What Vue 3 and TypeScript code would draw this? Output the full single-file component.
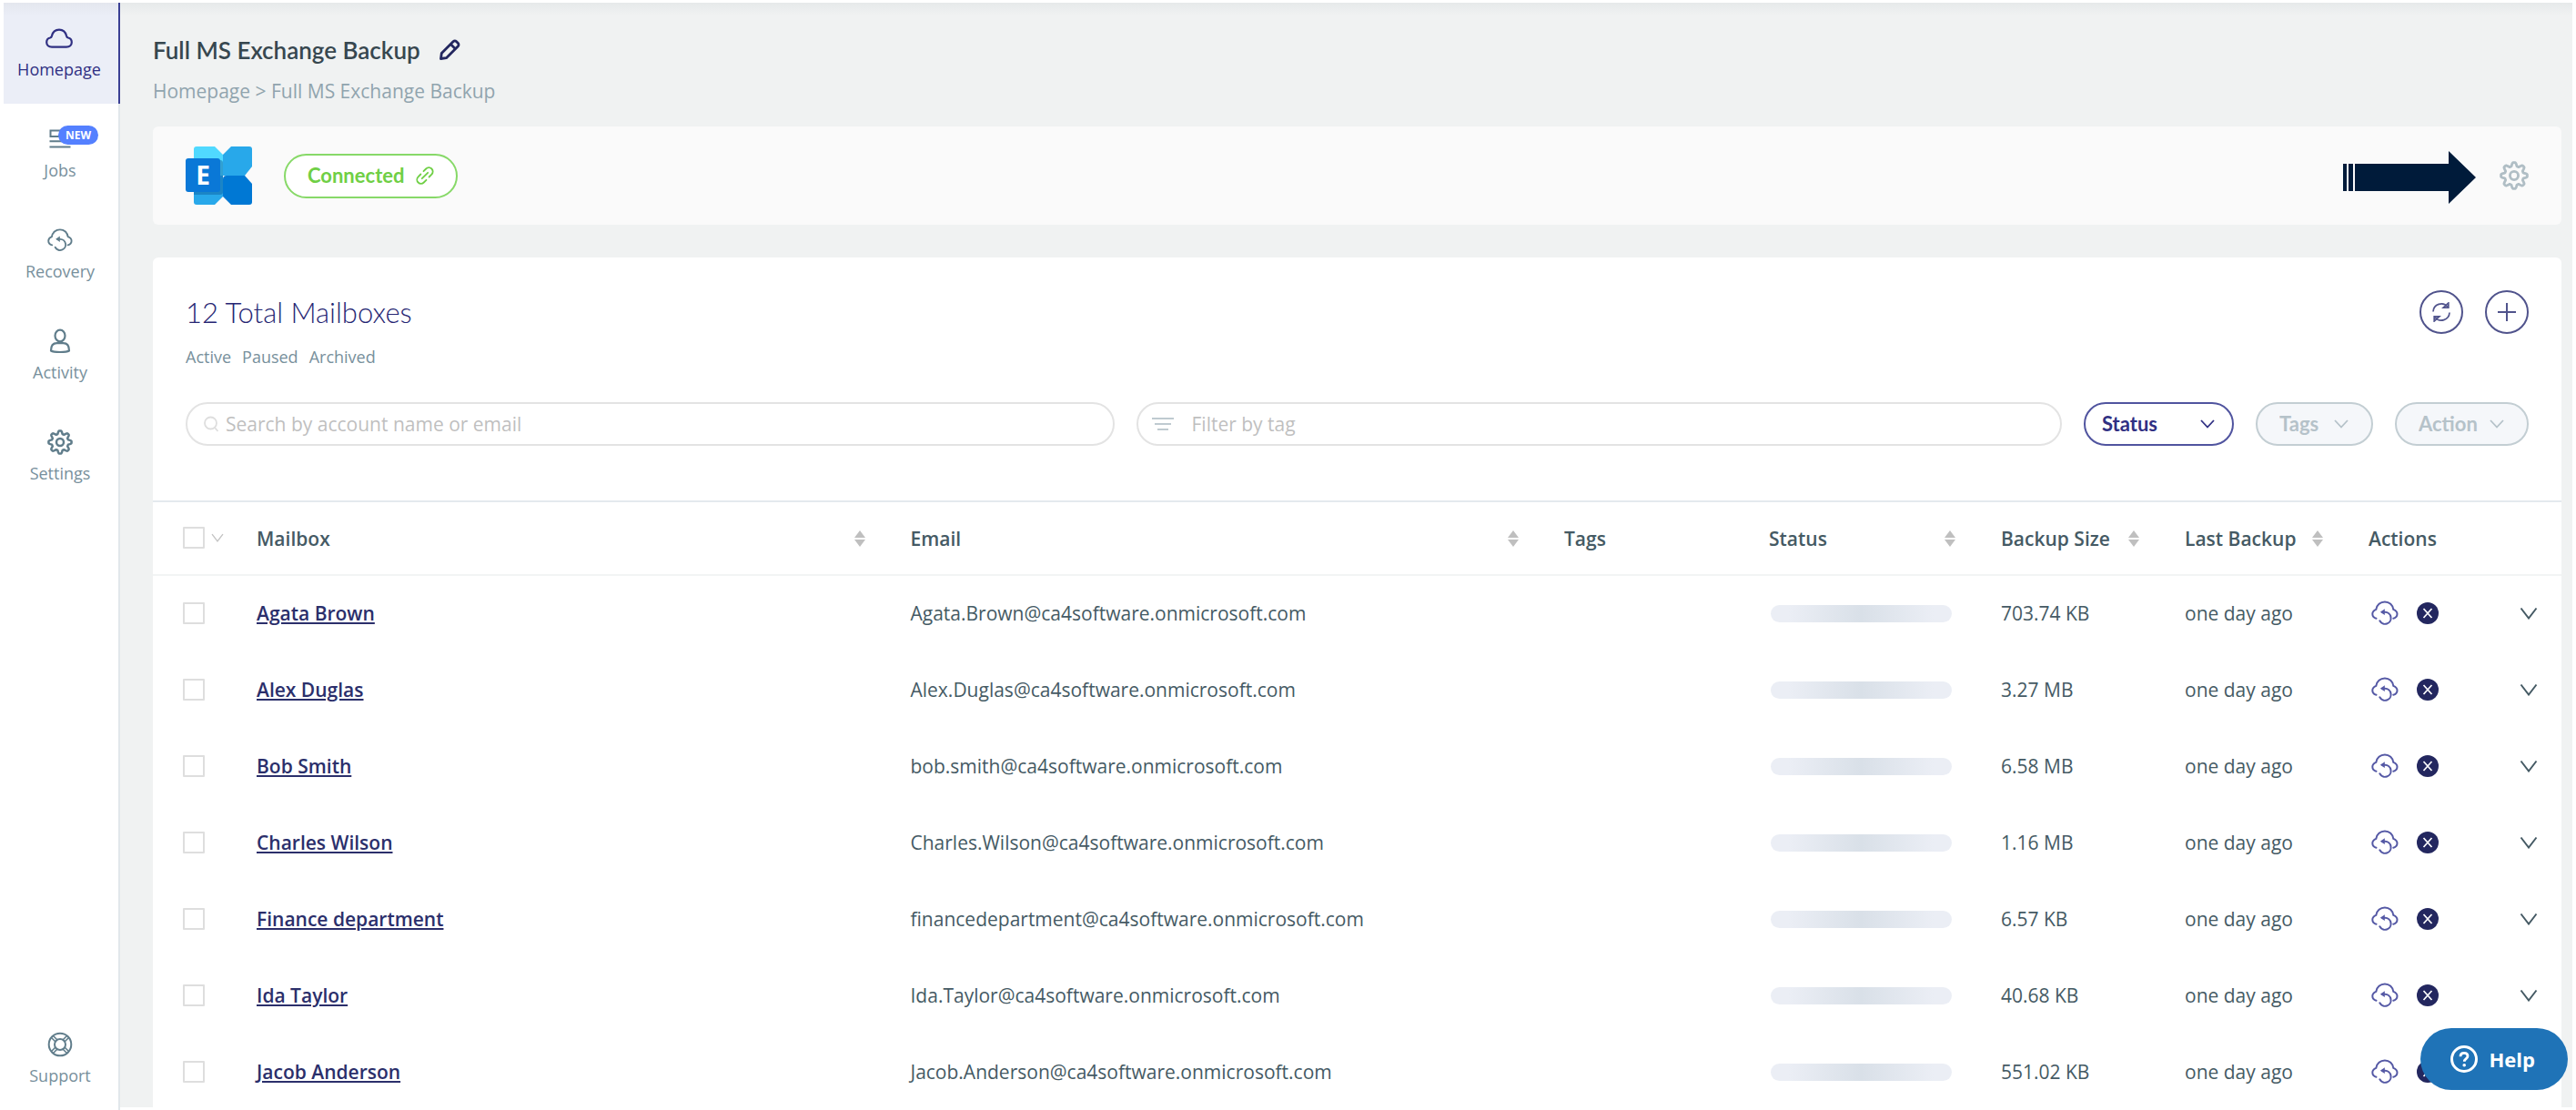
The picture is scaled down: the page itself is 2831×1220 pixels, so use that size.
<script setup lang="ts">
import { ref } from 'vue'

interface NavItem {
  label: string
  icon: string
  active?: boolean
  badge?: string
}

interface Mailbox {
  name: string
  email: string
  size: string
  last: string
}

const navItems: NavItem[] = [
  { label: 'Homepage', icon: 'cloud', active: true },
  { label: 'Jobs', icon: 'jobs', badge: 'NEW' },
  { label: 'Recovery', icon: 'recover' },
  { label: 'Activity', icon: 'user' },
  { label: 'Settings', icon: 'gear' },
]

const mailboxes: Mailbox[] = [
  { name: 'Agata Brown', email: 'Agata.Brown@ca4software.onmicrosoft.com', size: '703.74 KB', last: 'one day ago' },
  { name: 'Alex Duglas', email: 'Alex.Duglas@ca4software.onmicrosoft.com', size: '3.27 MB', last: 'one day ago' },
  { name: 'Bob Smith', email: 'bob.smith@ca4software.onmicrosoft.com', size: '6.58 MB', last: 'one day ago' },
  { name: 'Charles Wilson', email: 'Charles.Wilson@ca4software.onmicrosoft.com', size: '1.16 MB', last: 'one day ago' },
  { name: 'Finance department', email: 'financedepartment@ca4software.onmicrosoft.com', size: '6.57 KB', last: 'one day ago' },
  { name: 'Ida Taylor', email: 'Ida.Taylor@ca4software.onmicrosoft.com', size: '40.68 KB', last: 'one day ago' },
  { name: 'Jacob Anderson', email: 'Jacob.Anderson@ca4software.onmicrosoft.com', size: '551.02 KB', last: 'one day ago' },
]

const columns = [
  { key: 'mailbox', label: 'Mailbox', sortable: true },
  { key: 'email', label: 'Email', sortable: true },
  { key: 'tags', label: 'Tags', sortable: false },
  { key: 'status', label: 'Status', sortable: true },
  { key: 'size', label: 'Backup Size', sortable: true },
  { key: 'last', label: 'Last Backup', sortable: true },
  { key: 'actions', label: 'Actions', sortable: false },
]

const search = ref('')
const tagFilter = ref('')

// Eight-toothed cog outline on a 28 x 28 grid
function cogPath(): string {
  const points: string[] = []
  for (let i = 0; i < 160; i++) {
    const angle = (i / 160) * Math.PI * 2
    const wave = Math.max(-1, Math.min(1, Math.cos(angle * 8) * 1.4))
    const radius = 10.9 + wave * 1.7
    points.push(`${(14 + radius * Math.sin(angle)).toFixed(2)} ${(14 - radius * Math.cos(angle)).toFixed(2)}`)
  }
  return `M${points.join('L')}Z`
}
const cog = cogPath()
</script>

<template>
  <div class="app">
    <svg class="sprite" aria-hidden="true">
      <symbol id="i-cloud" viewBox="0 0 30 28">
        <path d="M7 23.700C3.400 23.700 1.200 21.400 1.200 18.500c0-2.700 1.700-4.500 3.900-5 1-.3 1.500-.8 1.800-1.900C7.900 7.400 11 4.700 15 4.700s7.100 2.700 8.100 6.900c.3 1.100.8 1.600 1.800 1.900 2.200.5 3.900 2.300 3.900 5 0 2.900-2.200 5.200-5.800 5.200z" fill="none" stroke="currentColor" stroke-width="2.200" />
      </symbol>
      <symbol id="i-jobs" viewBox="0 0 28 28">
        <path d="M3.500 4.500h21v6.500h-21zM2.500 16.300h23M2.500 22.500h23" fill="none" stroke="currentColor" stroke-width="2" />
      </symbol>
      <symbol id="i-recover" viewBox="0 0 30 28">
        <path d="M5.500 19.800C2.800 19 1.300 17.200 1.300 14.800c0-2.600 1.800-4 4-4.900C6 5 10 1.500 14.900 1.500s8.800 3.500 9.400 8.400c2.300.9 4.200 2.300 4.200 4.900 0 2.400-1.500 4.200-4.200 5M12 12.800h3a6.500 6.500 0 1 1-5.700 9.500" fill="none" stroke="currentColor" stroke-width="2" stroke-linecap="round" />
        <path d="M9.800 12.700l5-3.400v6.800z" fill="currentColor" />
      </symbol>
      <symbol id="i-user" viewBox="0 0 28 28">
        <ellipse cx="14" cy="8" rx="5.500" ry="6.300" fill="none" stroke="currentColor" stroke-width="2.200" />
        <path d="M10.500 16.200h7c4 0 6.500 2.800 6.500 8.300-3 2-17 2-20 0 0-5.500 2.500-8.300 6.500-8.300z" fill="none" stroke="currentColor" stroke-width="2.200" stroke-linejoin="round" />
      </symbol>
      <symbol id="i-gear" viewBox="0 0 28 28">
        <path :d="cog" fill="none" stroke="currentColor" stroke-width="2.500" stroke-linejoin="round" />
        <circle cx="14" cy="14" r="4" fill="none" stroke="currentColor" stroke-width="2.500" />
      </symbol>
      <symbol id="i-support" viewBox="0 0 28 28">
        <g fill="none" stroke="currentColor" stroke-width="2">
          <circle cx="14" cy="14" r="12.300" />
          <circle cx="14" cy="14" r="6" />
          <path d="M4.500 6.500l4.500 4.500M6.500 4.500l4.500 4.500M23.500 6.500l-4.500 4.500M21.500 4.500l-4.500 4.500M4.500 21.500l4.500-4.500M6.500 23.500l4.500-4.500M23.500 21.500l-4.500-4.500M21.500 23.500l-4.500-4.500" stroke-width="1.600" />
        </g>
      </symbol>
      <symbol id="i-down" viewBox="0 0 20 14">
        <path d="M1.500 1.500L10 12.500 18.500 1.500" fill="none" stroke="currentColor" stroke-width="2" />
      </symbol>
      <symbol id="i-caret" viewBox="0 0 16 10">
        <path d="M1 1l7 7.500L15 1" fill="none" stroke="currentColor" stroke-width="1.800" />
      </symbol>
    </svg>

    <nav class="sidebar" aria-label="Main">
      <a v-for="item in navItems" :key="item.label" href="#" class="nav-item" :class="{ active: item.active }">
        <span class="nav-icon">
          <svg class="icon" :class="{ wide: item.icon === 'cloud' }"><use :href="`#i-${item.icon}`" /></svg>
          <span v-if="item.badge" class="badge">{{ item.badge }}</span>
        </span>
        <span>{{ item.label }}</span>
      </a>
      <a href="#" class="nav-item support">
        <span class="nav-icon"><svg class="icon"><use href="#i-support" /></svg></span>
        <span>Support</span>
      </a>
    </nav>

    <main class="main">
      <header class="page-head">
        <h1>Full MS Exchange Backup</h1>
        <button class="plain edit" aria-label="Rename">
          <svg width="24" height="24" viewBox="0 0 24 24" fill="none" stroke="currentColor" stroke-width="2.800" stroke-linejoin="round">
            <path d="M2.500 21.500l.8-6L16 2.800c1.100-1.100 2.600-1.100 3.700 0l1.500 1.500c1.100 1.100 1.100 2.600 0 3.700L8.500 20.700z" />
            <path d="M13.200 5.500l5.300 5.300" stroke-width="2.800" />
          </svg>
        </button>
      </header>
      <div class="crumbs"><a href="#">Homepage</a> &gt; <span>Full MS Exchange Backup</span></div>

      <section class="connection">
        <svg class="exchange" viewBox="0 0 74 64" role="img" aria-label="Microsoft Exchange">
          <path d="M12 0h20l9 9v23H9V3q0-3 3-3z" fill="#50d9ff" />
          <path d="M9 32h32v23l-9 9H12q-3 0-3-3z" fill="#28a8ea" />
          <path d="M41 9l9-9h20q3 0 3 3v19l-8 10H41z" fill="#28a8ea" />
          <path d="M45 32h20l8 9v20q0 3-3 3H50l-9-9V36q0-4 4-4z" fill="#0078d4" />
          <path d="M9 15h29q3 0 3 3v32q0 3-3 3H9z" fill="#0b5a9c" opacity=".45" />
          <rect x="0" y="13" width="38" height="37" rx="3" fill="#0a78d7" />
          <text x="19" y="42" text-anchor="middle" font-family="Open Sans, sans-serif" font-weight="700" font-size="28" fill="#fff">E</text>
        </svg>
        <button class="connected">
          Connected
          <svg width="20" height="20" viewBox="0 0 20 20" fill="none" stroke="currentColor" stroke-width="1.800" stroke-linecap="round">
            <path d="M8.500 5.200l2.700-2.700a4.300 4.300 0 0 1 6.200 6.200l-2.800 2.800M11.500 14.800l-2.700 2.700a4.300 4.300 0 0 1-6.200-6.200l2.800-2.800M6.800 13.200l6.400-6.400" />
          </svg>
        </button>
        <svg class="pointer" viewBox="0 0 146 58" aria-hidden="true">
          <path d="M0 14h4v30H0zM6 14h5v30H6zM13 14h103V0l30 29-30 29V44H13z" fill="#001b3a" />
        </svg>
        <button class="plain config" aria-label="Backup settings">
          <svg width="32" height="32"><use href="#i-gear" /></svg>
        </button>
      </section>

      <section class="panel">
        <div class="panel-head">
          <h2>12 Total Mailboxes</h2>
          <div class="tools">
            <button class="round" aria-label="Refresh">
              <svg width="22" height="22" viewBox="0 0 22 22" fill="none" stroke="currentColor" stroke-width="1.700">
                <path d="M2 10.500a9 9 0 0 1 16-5.200M20 11.500a9 9 0 0 1-16 5.200" />
                <path d="M18.800 1v5.200h-5.600zM3.200 21v-5.200h5.600z" />
              </svg>
            </button>
            <button class="round" aria-label="Add">
              <svg width="22" height="22" viewBox="0 0 22 22" fill="none" stroke="currentColor" stroke-width="2">
                <path d="M11 1v20M1 11h20" />
              </svg>
            </button>
          </div>
        </div>
        <div class="legend"><span>Active</span><span>Paused</span><span>Archived</span></div>

        <div class="filters">
          <label class="field search">
            <svg width="16" height="18" viewBox="0 0 16 18" fill="none" stroke="#dedede" stroke-width="1.800">
              <circle cx="7.500" cy="8" r="6.500" /><path d="M12 13l3.500 4" />
            </svg>
            <input v-model="search" type="text" placeholder="Search by account name or email" aria-label="Search by account name or email" />
          </label>
          <label class="field tag">
            <svg width="24" height="16" viewBox="0 0 24 16" stroke="#bfcad0" stroke-width="2">
              <path d="M0 2h24M3 8h18M6 14h12" />
            </svg>
            <input v-model="tagFilter" type="text" placeholder="Filter by tag" aria-label="Filter by tag" />
          </label>
          <div class="drop status">
            <select aria-label="Status"><option>Status</option></select>
            <svg><use href="#i-caret" /></svg>
          </div>
          <div class="drop tags">
            <select aria-label="Tags" disabled><option>Tags</option></select>
            <svg><use href="#i-caret" /></svg>
          </div>
          <div class="drop action">
            <select aria-label="Action" disabled><option>Action</option></select>
            <svg><use href="#i-caret" /></svg>
          </div>
        </div>

        <table>
          <colgroup>
            <col class="c-check" />
            <col v-for="col in columns" :key="col.key" :class="`c-${col.key}`" />
          </colgroup>
          <thead>
            <tr>
              <th class="check">
                <span class="check-all">
                  <input type="checkbox" aria-label="Select all" />
                  <svg width="14" height="10"><use href="#i-down" /></svg>
                </span>
              </th>
              <th v-for="col in columns" :key="col.key" scope="col">
                <span class="th">
                  {{ col.label }}
                  <svg v-if="col.sortable" width="16" height="20" viewBox="0 0 16 20" fill="#bfbfbf">
                    <path d="M8 1l6 8H2zM8 19l6-8H2z" />
                  </svg>
                </span>
              </th>
            </tr>
          </thead>
          <tbody>
            <tr v-for="box in mailboxes" :key="box.name">
              <td class="check"><input type="checkbox" :aria-label="`Select ${box.name}`" /></td>
              <td><a href="#" class="name">{{ box.name }}</a></td>
              <td>{{ box.email }}</td>
              <td></td>
              <td><div class="skeleton"></div></td>
              <td>{{ box.size }}</td>
              <td>{{ box.last }}</td>
              <td>
                <div class="actions">
                  <button class="plain" aria-label="Recover"><svg class="recover"><use href="#i-recover" /></svg></button>
                  <button class="plain" aria-label="Remove">
                    <svg width="24" height="24" viewBox="0 0 24 24">
                      <circle cx="12" cy="12" r="12" fill="#23275f" />
                      <path d="M7.500 7l9 10M16.500 7l-9 10" stroke="#fff" stroke-width="1.700" />
                    </svg>
                  </button>
                  <button class="plain expand" aria-label="Expand"><svg width="20" height="14"><use href="#i-down" /></svg></button>
                </div>
              </td>
            </tr>
          </tbody>
        </table>
      </section>
    </main>

    <button class="help">
      <svg width="32" height="32" viewBox="0 0 32 32" fill="none" stroke="#fff" stroke-width="3">
        <circle cx="16" cy="16" r="13.500" />
        <path d="M12 13.200c0-2.400 1.600-3.900 4-3.900s4 1.400 4 3.500c0 2.800-3.700 2.800-3.700 5.900" stroke-width="2.800" />
        <circle cx="16.200" cy="22.700" r="1.800" fill="#fff" stroke="none" />
      </svg>
      Help
    </button>
  </div>
</template>

<style>
body {
  margin: 0;
  background: #fff;
}
</style>

<style scoped>
.app {
  box-sizing: border-box;
  display: flex;
  height: 100vh;
  padding: 3px 4px 0;
  overflow: hidden;
  font-family: "Open Sans", "Noto Sans", sans-serif;
  font-size: 21px;
  line-height: 30px;
  color: #455a64;
}
.app *,
.app *::before {
  box-sizing: border-box;
}
.sprite {
  position: absolute;
  width: 0;
  height: 0;
}
a {
  color: inherit;
  text-decoration: none;
}
svg {
  display: block;
  flex: none;
}
button,
input,
select {
  margin: 0;
  font: inherit;
  color: inherit;
}
.plain {
  padding: 0;
  border: 0;
  background: none;
}

.sidebar {
  display: flex;
  flex: none;
  flex-direction: column;
  width: 128px;
  border-right: 2px solid #e1e7eb;
}
.nav-item {
  display: flex;
  flex-direction: column;
  gap: 7px;
  align-items: center;
  height: 111px;
  padding: 25px 2px 0 0;
  font-size: 18px;
  line-height: 27px;
  color: #78909c;
}
.nav-item.active {
  margin-right: -2px;
  padding-right: 4px;
  border-right: 2px solid #3a3f94;
  background: linear-gradient(#e4e7ee, #ebeef7 14px);
  font-weight: 500;
  color: #303083;
}
.support {
  margin-top: auto;
}
.nav-icon {
  position: relative;
  color: #607d8b;
}
.active .nav-icon {
  color: #303083;
}
.icon {
  width: 28px;
  height: 28px;
}
.icon.wide {
  width: 30px;
}
.badge {
  position: absolute;
  top: -1px;
  left: 12px;
  padding: 0 8px;
  border-radius: 11px;
  background: #5480ff;
  font-size: 12px;
  font-weight: 700;
  line-height: 21px;
  color: #fff;
}

.main {
  flex: 1;
  min-width: 0;
  margin-bottom: 3px;
  padding: 34px 12px 0 36px;
  overflow: hidden;
  background: linear-gradient(#e6e9ea, #f0f2f2 14px);
}
.page-head {
  display: flex;
  gap: 20px;
  align-items: center;
}
h1,
h2 {
  margin: 0;
  font-family: Lato, "Open Sans", sans-serif;
}
h1 {
  font-size: 26px;
  font-weight: 600;
  line-height: 36px;
  color: #37474f;
}
.edit {
  color: #23275f;
}
.crumbs {
  margin: 12px 0 24px;
  color: #90a4ae;
}
.connection {
  display: flex;
  align-items: center;
  margin-bottom: 36px;
  padding: 22px 36px;
  border-radius: 6px;
  background: #fafafa;
}
.exchange {
  width: 74px;
  height: 64px;
}
.connected {
  display: flex;
  gap: 13px;
  align-items: center;
  height: 49px;
  margin-left: 34px;
  padding: 0 24px;
  border: 2px solid #87d968;
  border-radius: 25px;
  background: #fff;
  font-family: Lato, "Open Sans", sans-serif;
  font-size: 22px;
  font-weight: 700;
  color: #6fcf45;
}
.pointer {
  width: 146px;
  height: 58px;
  margin-top: 4px;
  margin-left: auto;
}
.config {
  margin-left: 26px;
  color: #b0bec5;
}

.panel {
  border-radius: 6px 6px 0 0;
  background: #fff;
}
.panel-head {
  display: flex;
  justify-content: space-between;
  padding: 36px 36px 0;
}
h2 {
  font-size: 31px;
  font-weight: 300;
  line-height: 48px;
  color: #262673;
}
.tools {
  display: flex;
  gap: 24px;
}
.round {
  display: flex;
  align-items: center;
  justify-content: center;
  width: 48px;
  height: 48px;
  padding: 0;
  border: 2px solid #50538c;
  border-radius: 50%;
  background: #fff;
  color: #50538c;
}
.legend {
  display: flex;
  gap: 12px;
  padding: 12px 36px 36px;
  font-size: 18px;
  line-height: 27px;
  color: #78909c;
}
.filters {
  display: flex;
  gap: 24px;
  padding: 0 36px 60px;
}
.field {
  display: flex;
  flex: 1;
  align-items: center;
  height: 48px;
  padding: 0 18px;
  border: 2px solid #e3e3e3;
  border-radius: 24px;
}
.search {
  gap: 8px;
}
.tag {
  gap: 20px;
  padding-left: 15px;
}
.field input {
  flex: 1;
  min-width: 0;
  padding: 0;
  border: 0;
  outline: 0;
  background: none;
}
.field input::placeholder {
  color: #bfbfbf;
  opacity: 1;
}
.drop {
  position: relative;
  height: 48px;
  font-family: Lato, "Open Sans", sans-serif;
  font-size: 22px;
  font-weight: 700;
  color: #b5c2c9;
}
.drop select {
  width: 100%;
  height: 100%;
  padding: 0 0 0 24px;
  border: 2px solid #c3ced3;
  border-radius: 24px;
  background: #f5f7fa;
  appearance: none;
  opacity: 1;
}
.drop svg {
  position: absolute;
  top: 19px;
  right: 27px;
  width: 16px;
  height: 10px;
  pointer-events: none;
}
.drop.status {
  width: 165px;
  color: #303083;
}
.drop.status select {
  padding-left: 18px;
  border-color: #50549f;
  background: #fff;
}
.drop.status svg {
  right: 21px;
}
.drop.tags {
  width: 129px;
}
.drop.action {
  width: 147px;
}

table {
  width: 100%;
  border-top: 2px solid #e4e9ee;
  border-spacing: 0;
  table-layout: fixed;
}
.c-check {
  width: 90px;
}
.c-tags {
  width: 225px;
}
.c-status {
  width: 255px;
}
.c-size,
.c-last {
  width: 202px;
}
.c-actions {
  width: 236px;
}
th {
  height: 81px;
  padding: 0 24px;
  border-bottom: 2px solid #f2f4f4;
  font-weight: 600;
  text-align: left;
  color: #455a64;
}
td {
  height: 84px;
  padding: 0 24px 2px;
}
.check {
  padding: 0 0 2px 33px;
}
.th {
  display: flex;
  align-items: center;
  justify-content: space-between;
  white-space: nowrap;
}
.check-all {
  display: flex;
  gap: 7px;
  align-items: center;
  color: #c4c4c4;
}
input[type="checkbox"] {
  display: block;
  width: 24px;
  height: 24px;
  border: 2px solid #dedede;
  border-radius: 1px;
  background: #fff;
  appearance: none;
}
.name {
  font-weight: 600;
  color: #2b2f6b;
  text-decoration: underline;
}
.skeleton {
  height: 19px;
  margin: 0 6px 0 2px;
  border-radius: 10px;
  background: linear-gradient(90deg, #ebeef5 10%, #d9e0e8 50%, #ebeef5 90%);
}
.actions {
  display: flex;
  align-items: center;
  margin: 0 2px 0 3px;
}
.recover {
  width: 30px;
  height: 28px;
  margin-right: 20px;
  color: #5559a5;
}
.expand {
  margin-left: auto;
}

.help {
  position: fixed;
  right: 9px;
  bottom: 22px;
  display: flex;
  gap: 12px;
  align-items: center;
  height: 68px;
  padding: 0 36px 0 32px;
  border: 0;
  border-radius: 34px;
  background: #1f73b7;
  font-size: 22px;
  font-weight: 700;
  color: #fff;
}
</style>
